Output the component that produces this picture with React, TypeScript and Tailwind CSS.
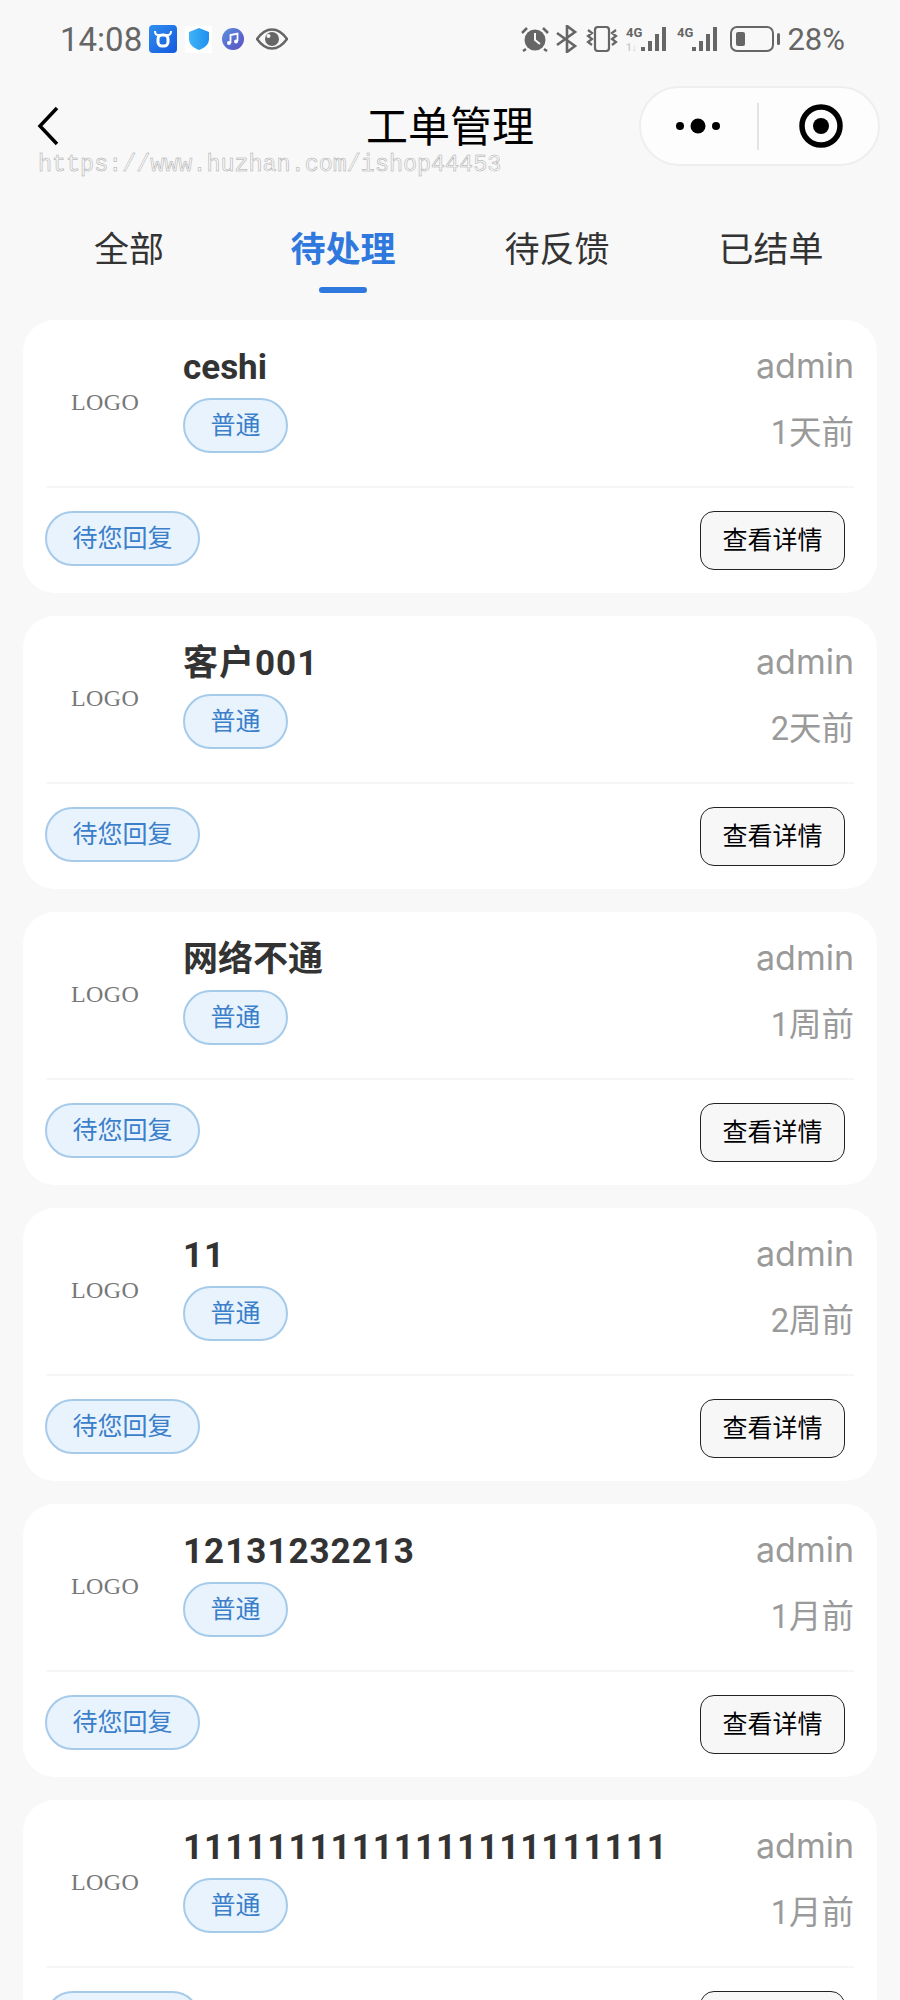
import React from "react";

const cards = [
  { title: "ceshi", time: "1天前" },
  { title: "客户001", time: "2天前" },
  { title: "网络不通", time: "1周前" },
  { title: "11", time: "2周前" },
  { title: "12131232213", time: "1月前" },
  { title: "11111111111111111111111", time: "1月前" },
];

function Bars({ tiny }: { tiny?: boolean }) {
  return (
    <svg width="43" height="26" viewBox="0 0 43 26" fill="#666">
      <text x="0" y="11" fontSize="13" fontWeight="700" fontFamily="Roboto, sans-serif" fill="#666">4G</text>
      {tiny && <text x="0" y="25" fontSize="10" fontWeight="700" fontFamily="Roboto, sans-serif" fill="#ccc">1↓</text>}
      <rect x="15" y="21" width="4" height="4" />
      <rect x="22" y="15" width="4" height="10" />
      <rect x="29" y="8" width="4" height="17" />
      <rect x="36" y="1" width="4" height="24" />
    </svg>
  );
}

function Card({ title, time }: { title: string; time: string }) {
  const digits = /[0-9]/.test(title);
  return (
    <div className="h-[273px] shrink-0 rounded-[32px] bg-white pl-[23px] pr-[23px] flex flex-col">
      <div className="h-[168px] flex border-b-2 border-[#f6f6f6]">
        <div className="w-[138px] flex items-center justify-start pl-[25px] pb-[2px] shrink-0">
          <span className="font-['Liberation_Serif',serif] text-[24px] text-[#777] tracking-[0.4px]">LOGO</span>
        </div>
        <div className="flex-1 flex flex-col items-start pt-[25px] -ml-[1px]">
          <div className={digits ? "text-[35px] leading-[46px] font-bold text-[#333] tracking-[1px]" : "text-[35px] leading-[46px] font-bold text-[#333]"}>{title}</div>
          <div className="mt-[7px] h-[55px] w-[105px] rounded-full border-2 border-[#a6cbea] bg-[#e9f3fd] flex items-center justify-center text-[25px] text-[#3b7fcb]">
            普通
          </div>
        </div>
        <div className="flex flex-col items-end pt-[23px] text-[#9a9a9a]">
          <div className="text-[34px] leading-[46px] font-['Inter','Noto_Sans_CJK_SC',sans-serif]">admin</div>
          <div className="text-[32.5px] leading-[46px] mt-[21px]">{time}</div>
        </div>
      </div>
      <div className="flex-1 flex items-start justify-between pt-[23px] pr-[9px] -ml-[1px]">
        <div className="h-[55px] w-[155px] rounded-full border-2 border-[#a6cbea] bg-[#e9f3fd] flex items-center justify-center text-[25px] text-[#3b7fcb]">
          待您回复
        </div>
        <div className="h-[59px] w-[145px] rounded-[14px] border-[1.5px] border-[#222] bg-[#f7f7f7] flex items-center justify-center text-[25px] text-black">
          查看详情
        </div>
      </div>
    </div>
  );
}

export default function App() {
  const tabs = ["全部", "待处理", "待反馈", "已结单"];
  return (
    <div className="relative w-[900px] h-[2000px] overflow-hidden bg-[#f8f8f8] font-['Roboto','Noto_Sans_CJK_SC',sans-serif]">
      {/* status bar */}
      <div className="h-[78px] pl-[60px] pr-[55px] flex items-center justify-between text-[#666]">
        <div className="flex items-center">
          <span className="text-[33px] leading-none w-[89px]">14:08</span>
          <svg width="28" height="28" viewBox="0 0 28 28">
            <defs>
              <linearGradient id="a" x1="0" y1="0" x2="1" y2="1">
                <stop offset="0" stopColor="#2f8ff0" />
                <stop offset="1" stopColor="#1558dc" />
              </linearGradient>
            </defs>
            <rect width="28" height="28" rx="4" fill="url(#a)" />
            <path d="M6 6c0 3 1 4 3 4h10c2 0 3-1 3-4" stroke="#fff" strokeWidth="2" fill="none" />
            <rect x="9" y="10" width="10" height="11" rx="4" stroke="#fff" strokeWidth="3" fill="none" />
          </svg>
          <div className="ml-[8px] w-[27px] h-[27px] bg-white flex items-center justify-center">
            <svg width="20" height="22" viewBox="0 0 20 22">
              <defs>
                <linearGradient id="b" x1="0" y1="0" x2="1" y2="0">
                  <stop offset="0" stopColor="#3fb4f4" />
                  <stop offset="1" stopColor="#1e90f0" />
                </linearGradient>
              </defs>
              <path d="M10 0l10 4v7c0 6-5 9-10 11C5 20 0 17 0 11V4z" fill="url(#b)" />
            </svg>
          </div>
          <svg className="ml-[10px]" width="22" height="22" viewBox="0 0 22 22">
            <defs>
              <linearGradient id="c" x1="0" y1="0" x2="1" y2="1">
                <stop offset="0" stopColor="#5a8fdc" />
                <stop offset="1" stopColor="#5a4fc4" />
              </linearGradient>
            </defs>
            <circle cx="11" cy="11" r="11" fill="url(#c)" />
            <path d="M8.5 15V7l7-1.5V13" stroke="#fff" strokeWidth="1.8" fill="none" />
            <circle cx="7" cy="15" r="2" fill="#fff" />
            <circle cx="14" cy="13.5" r="2" fill="#fff" />
          </svg>
          <svg className="ml-[12px]" width="32" height="22" viewBox="0 0 32 22">
            <path d="M1 11C6 4 11 1.500 16 1.500S26 4 31 11c-5 7-10 9.500-15 9.500S6 18 1 11z" fill="none" stroke="#666" strokeWidth="2.500" />
            <circle cx="16" cy="11" r="7" fill="#666" />
            <circle cx="12.500" cy="8" r="2" fill="#f8f8f8" />
          </svg>
        </div>
        <div className="flex items-center">
          <svg width="28" height="26" viewBox="0 0 28 26">
            <circle cx="14" cy="14" r="10.500" fill="#666" />
            <path d="M14 7v7l5 4" stroke="#f8f8f8" strokeWidth="2" fill="none" />
            <path d="M1 7l5-5M27 7l-5-5M5 23l-3 2M23 23l3 2" stroke="#666" strokeWidth="2.500" />
          </svg>
          <svg className="ml-[7px]" width="22" height="28" viewBox="0 0 22 28" fill="none" stroke="#666" strokeWidth="2.600">
            <path d="M1 8l18 13-8 6V1l8 6L1 20" />
          </svg>
          <svg className="ml-[8px]" width="32" height="26" viewBox="0 0 32 26" fill="none" stroke="#666" strokeWidth="2.200">
            <rect x="9" y="1" width="14" height="24" rx="3" />
            <path d="M2 4l4 3-4 3 4 3-4 3 4 3M30 4l-4 3 4 3-4 3 4 3-4 3" />
          </svg>
          <div className="ml-[8px] flex">
            <Bars tiny />
          </div>
          <div className="ml-[8px] flex">
            <Bars />
          </div>
          <svg className="ml-[10px]" width="50" height="26" viewBox="0 0 50 26">
            <rect x="1" y="1" width="42" height="24" rx="6" fill="none" stroke="#666" strokeWidth="2" />
            <rect x="6" y="6" width="9" height="14" rx="2" fill="#666" />
            <rect x="47" y="7" width="3" height="12" rx="1.500" fill="#666" />
          </svg>
          <span className="ml-[7px] text-[31px] leading-none">28%</span>
        </div>
      </div>

      {/* nav */}
      <div className="h-[96px] px-[20px] grid grid-cols-[1fr_auto_1fr] items-center">
        <svg className="ml-[17px]" width="24" height="40" viewBox="0 0 24 40" fill="none" stroke="#000" strokeWidth="3.500">
          <path d="M20 2L3 20l17 18" />
        </svg>
        <div className="text-[42px] leading-none text-black pt-[4px]">工单管理</div>
        <div className="justify-self-end w-[241px] h-[80px] rounded-full border-2 border-[#eeeeee] bg-[#fdfdfd] flex items-center">
          <svg className="ml-[34px]" width="46" height="20" viewBox="0 0 46 20" fill="#000">
            <circle cx="5" cy="10" r="4" />
            <circle cx="23" cy="10" r="7.500" />
            <circle cx="41" cy="10" r="4" />
          </svg>
          <div className="ml-[36px] w-[2px] h-[47px] bg-[#e4e4e4]" />
          <svg className="ml-[40px]" width="44" height="44" viewBox="0 0 44 44">
            <circle cx="22" cy="22" r="19" fill="none" stroke="#000" strokeWidth="5.500" />
            <circle cx="22" cy="22" r="8" fill="#000" />
          </svg>
        </div>
      </div>

      {/* watermark */}
      <div className="absolute left-[38px] top-[150px] text-[23.4px] leading-[30px] whitespace-nowrap font-['Liberation_Mono',monospace] text-[#f8f8f8] [-webkit-text-stroke:0.5px_#a8a8a8]">
        https://www.huzhan.com/ishop44453
      </div>

      {/* tabs */}
      <div className="h-[146px] px-[22px] grid grid-cols-4 items-start">
        {tabs.map((t, i) => (
          <div key={t} className="flex flex-col items-center pt-[53px]">
            <span className={i === 1 ? "text-[35px] leading-[48px] font-bold text-[#2f78dd]" : "text-[35px] leading-[48px] text-[#333]"}>{t}</span>
            {i === 1 && <div className="mt-[12px] w-[48px] h-[6px] rounded-full bg-[#2f78dd]" />}
          </div>
        ))}
      </div>

      {/* list */}
      <div className="px-[23px] flex flex-col gap-[23px]">
        {cards.map((c, i) => (
          <Card key={i} title={c.title} time={c.time} />
        ))}
      </div>
    </div>
  );
}
